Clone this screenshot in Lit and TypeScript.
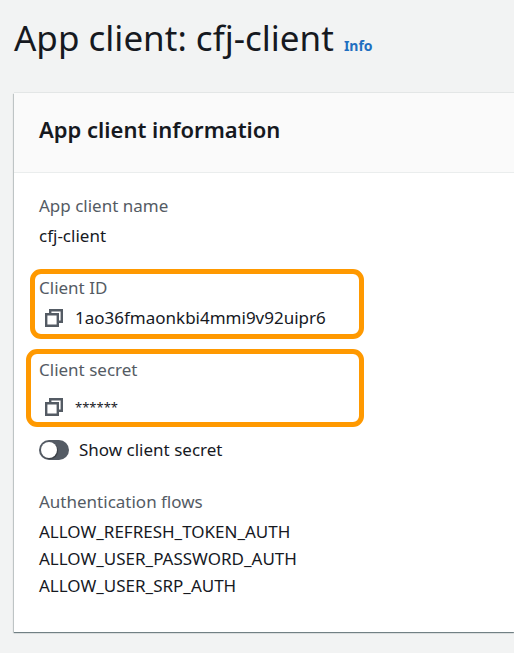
import { LitElement, html, css } from "lit";
import { customElement, property, state } from "lit/decorators.js";

@customElement("copy-button")
class CopyButton extends LitElement {
  @property() label = "Copy";

  static styles = css`
    :host { display: block; }
    .copy {
      display: block;
      padding: 0;
      border: 0;
      background: none;
      color: #545b64;
      cursor: pointer;
    }
    .icon { display: block; width: 18px; height: 18px; }
  `;

  render() {
    return html`<button class="copy" type="button" aria-label=${this.label}>
      <svg class="icon" viewBox="0 0 18 18" fill="none" stroke="currentColor" stroke-width="2.4">
        <path d="M1.2 5.2h11.6v11.6H1.2z" />
        <path d="M5.2 5.2V1.2h11.6v11.6h-4" />
      </svg>
    </button>`;
  }
}

@customElement("app-root")
class AppRoot extends LitElement {
  @state() private secretShown = false;

  static styles = css`
    :host {
      display: block;
      box-sizing: border-box;
      min-height: 100vh;
      padding: 11px 0 20px 14px;
      background: #f2f3f3;
      color: #16191f;
      font-family: "Noto Sans", "Open Sans", sans-serif;
      font-size: 17px;
      line-height: 27px;
    }
    .title-row {
      display: flex;
      align-items: baseline;
      gap: 10px;
      margin-bottom: 28px;
    }
    h1 { margin: 0; font-size: 35px; line-height: 54px; font-weight: 400; }
    .info {
      color: #1f6fc0;
      font-size: 14px;
      font-weight: 700;
      text-decoration: none;
    }
    .card {
      background: #fff;
      box-shadow: 0 1px 1px 0 rgba(0, 28, 36, 0.45), -1px 1px 1px 0 rgba(0, 28, 36, 0.15), 0 -1px 0 0 #e3e6e6;
    }
    .card-header {
      padding: 20px 25px 27px;
      background: #fafafa;
      border-bottom: 1px solid #eaeded;
    }
    h2 { margin: 0; font-size: 22px; line-height: 32px; font-weight: 600; }
    .card-body {
      display: flex;
      flex-direction: column;
      gap: 25px;
      padding: 19px 25px 33px;
    }
    .field { position: relative; display: flex; flex-direction: column; gap: 3px; }
    .label { color: #545b64; }
    .value { display: flex; align-items: center; gap: 12px; }
    .copyable { padding-left: 6px; }
    .secret { height: 42px; }
    .mask { font-size: 13px; }
    .highlight {
      position: absolute;
      box-sizing: border-box;
      border: 5px solid #ff9900;
      border-radius: 11px;
      width: 334px;
      height: 70px;
      top: -5px;
      left: -9px;
      pointer-events: none;
    }
    .highlight.tall { width: 338px; height: 78px; top: -7px; left: -13px; }
    .toggle {
      display: flex;
      align-items: center;
      align-self: flex-start;
      gap: 10px;
      margin-top: 5px;
      cursor: pointer;
    }
    .switch {
      appearance: none;
      box-sizing: border-box;
      width: 30px;
      height: 20px;
      margin: 0;
      padding: 2px;
      border-radius: 10px;
      background: #545b64;
      cursor: pointer;
    }
    .switch::before {
      content: "";
      display: block;
      width: 16px;
      height: 16px;
      border-radius: 50%;
      background: #fff;
      box-shadow: 1px 1px 1px rgba(0, 0, 0, 0.35);
    }
    .switch:checked { background: #0073bb; }
    .switch:checked::before { margin-left: auto; }
    ul { margin: 0; padding: 0; list-style: none; }
  `;

  render() {
    return html`
      <header class="title-row">
        <h1>App client: cfj-client</h1>
        <a class="info" href="#info">Info</a>
      </header>
      <section class="card">
        <div class="card-header"><h2>App client information</h2></div>
        <div class="card-body">
          <div class="field">
            <div class="label">App client name</div>
            <div class="value">cfj-client</div>
          </div>
          <div class="field">
            <div class="label">Client ID</div>
            <div class="value copyable">
              <copy-button label="Copy client ID"></copy-button>
              <span>1ao36fmaonkbi4mmi9v92uipr6</span>
            </div>
            <div class="highlight"></div>
          </div>
          <div class="field">
            <div class="label">Client secret</div>
            <div class="value copyable secret">
              <copy-button label="Copy client secret"></copy-button>
              <span class="mask">******</span>
            </div>
            <label class="toggle">
              <input
                class="switch"
                type="checkbox"
                role="switch"
                .checked=${this.secretShown}
                @change=${(e: Event) => (this.secretShown = (e.target as HTMLInputElement).checked)}
              />
              <span>Show client secret</span>
            </label>
            <div class="highlight tall"></div>
          </div>
          <div class="field">
            <div class="label">Authentication flows</div>
            <ul>
              <li>ALLOW_REFRESH_TOKEN_AUTH</li>
              <li>ALLOW_USER_PASSWORD_AUTH</li>
              <li>ALLOW_USER_SRP_AUTH</li>
            </ul>
          </div>
        </div>
      </section>
    `;
  }
}
